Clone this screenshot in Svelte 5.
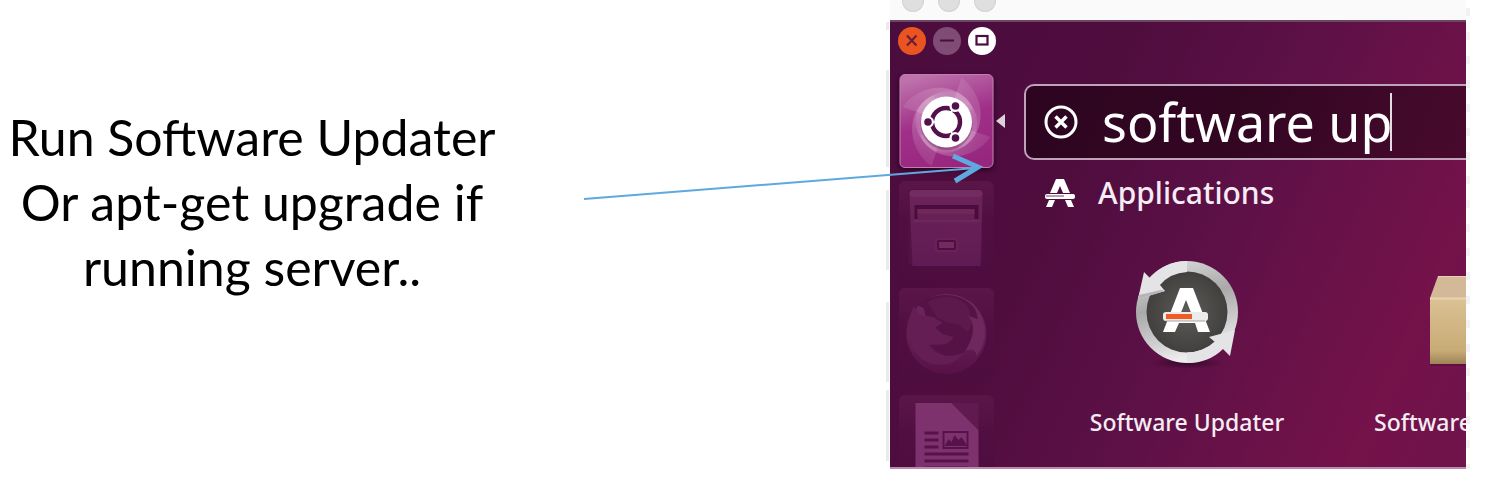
<script>
  let query = $state('software up');
  const lines = ['Run Software Updater', 'Or apt-get upgrade if', 'running server..'];
</script>

<main class="slide">
  <p class="caption">
    {#each lines as line}<span>{line}</span>{/each}
  </p>

  <section class="shot">
    <div class="window">
      <div class="titlebar"><i></i><i></i><i></i></div>
      <div class="desktop">
        <div class="controls">
          <button class="close" aria-label="Close">
            <svg viewBox="0 0 28 28"><path d="M9 8.500l9.500 10M18.500 8.500L9 18.500" stroke="#6b1d3a" stroke-width="2.200" /></svg>
          </button>
          <button class="minimize" aria-label="Minimize">
            <svg viewBox="0 0 28 28"><path d="M7 13.500h14" stroke="#4b0c3e" stroke-width="2" /></svg>
          </button>
          <button class="restore" aria-label="Restore">
            <svg viewBox="0 0 28 28"><rect x="8.500" y="9" width="11" height="8.500" fill="none" stroke="#4b0c3e" stroke-width="2.200" /></svg>
          </button>
        </div>

        <div class="dash">
          <nav class="launcher">
            <button class="tile home" aria-label="Dash home">
              <svg viewBox="0 0 94 94">
                <defs>
                  <linearGradient id="home" x1="0.300" y1="0" x2="0.600" y2="1">
                    <stop offset="0" stop-color="#bd72ab" />
                    <stop offset="0.500" stop-color="#a02f88" />
                    <stop offset="1" stop-color="#97277e" />
                  </linearGradient>
                  <linearGradient id="blade" x1="0" y1="0" x2="1" y2="0.500">
                    <stop offset="0" stop-color="#fff" stop-opacity="0.050" />
                    <stop offset="0.800" stop-color="#fff" stop-opacity="0.280" />
                    <stop offset="1" stop-color="#fff" stop-opacity="0.100" />
                  </linearGradient>
                  <clipPath id="tile"><rect x="1" y="1" width="92" height="92" rx="4" /></clipPath>
                </defs>
                <rect x="0.500" y="0.500" width="93" height="93" rx="5" fill="url(#home)" stroke="#c57cb6" />
                <g clip-path="url(#tile)">
                  {#each [0, 90, 180, 270] as angle}
                    <path d="M3 33C22 6 66 6 77 42C80 58 72 70 60 74L47 48z" fill="url(#blade)" transform="rotate({angle} 47 48)" />
                  {/each}
                </g>
                <circle cx="47" cy="50" r="26" fill="#5c1650" opacity="0.350" />
                <circle cx="47" cy="48" r="25.500" fill="#fff" />
                <circle cx="46.500" cy="48" r="14" fill="none" stroke="#54104a" stroke-width="4.500" />
                <path d="M46 48l-20 0M46 48l10-17.300M46 48l10 17.300" stroke="#fff" stroke-width="1.500" />
                <circle cx="29" cy="48" r="5.500" fill="#fff" />
                <circle cx="55.500" cy="32.500" r="5.500" fill="#fff" />
                <circle cx="55.500" cy="63.500" r="5.500" fill="#fff" />
                <g fill="#54104a">
                  <circle cx="28.500" cy="48" r="3.800" />
                  <circle cx="56" cy="32" r="3.800" />
                  <circle cx="56" cy="64" r="3.800" />
                </g>
              </svg>
              <svg class="pointer" viewBox="0 0 10 14"><path d="M0 7L9 0v14z" fill="#dcd3da" /></svg>
            </button>

            <button class="tile" aria-label="Files">
              <svg viewBox="0 0 94 94">
                <defs>
                  <linearGradient id="files" x1="0" y1="0" x2="0" y2="1">
                    <stop offset="0" stop-color="#6c2459" />
                    <stop offset="1" stop-color="#5f1b53" />
                  </linearGradient>
                </defs>
                <path d="M14 8h65q4 0 4 5v66q0 6-5 6H15q-6 0-6-6V14q0-6 5-6z" fill="#521344" />
                <path d="M14 9h65q4 0 4 5l-2 71H13L10 14q0-5 4-5z" fill="url(#files)" />
                <rect x="10" y="9" width="73" height="7" rx="4" fill="#722c60" />
                <path d="M15 38V24h64v14h-4V28H18v10z" fill="#490d3d" />
                <rect x="18" y="28" width="57" height="5" fill="#702859" />
                <path d="M14 40h66" stroke="#6e275b" stroke-width="2" />
                <rect x="35" y="57" width="24" height="14" rx="2" fill="#6a2159" />
                <rect x="38.500" y="60" width="17" height="8" rx="1" fill="#74295f" stroke="#4d0f40" stroke-width="2" />
              </svg>
            </button>

            <button class="tile" aria-label="Firefox">
              <svg viewBox="0 0 94 94">
                <defs>
                  <linearGradient id="fox" x1="0" y1="0" x2="0" y2="1">
                    <stop offset="0" stop-color="#6e2a5b" />
                    <stop offset="0.600" stop-color="#641c53" />
                    <stop offset="1" stop-color="#561147" />
                  </linearGradient>
                </defs>
                <circle cx="47" cy="46" r="40" fill="url(#fox)" />
                <path d="M18 17C31 4 63 2 76 22C87 42 73 68 52 68C41 68 34 61 29 56L42 56C48 54 52 51 54 49L43 46 36 40 38 34 27 31 24 20z" fill="#541245" />
                <path d="M28 14C45 4 67 10 70 23C74 34 72 40 68 44L58 36 49 35 38 30z" fill="#5c1a4c" />
                <path d="M67 10C87 24 91 51 77 68C76 60 70 61 65 64C76 48 75 35 69 28L78 31C78 23 73 14 67 10z" fill="#6f285d" />
                <path d="M8 34L14 18 20 27 34 29 43 35 35 40 35 47 54 49C49 59 39 56 29 57C37 70 54 70 65 64C53 83 22 80 13 60z" fill="#651e54" />
              </svg>
            </button>

            <button class="tile" aria-label="Writer">
              <svg viewBox="0 0 94 94">
                <path d="M16 8h36l27 27v59H16z" fill="#7e326d" />
                <path d="M52 8l27 27V8z" fill="#601a50" />
                <path d="M25 38h14M25 45h14M25 52h14M25 59h44M25 66h44M25 73h44" stroke="#58124a" stroke-width="3" />
                <rect x="44" y="37" width="24" height="16" fill="#7e326d" stroke="#58124a" stroke-width="2" />
                <path d="M45 51l4-7 3 3 3-7 4 5 3-3 6 9z" fill="#58124a" />
              </svg>
            </button>
          </nav>

          <div class="results">
            <div class="search">
              <button class="clear" aria-label="Clear search">
                <svg viewBox="0 0 34 34" fill="none" stroke="#fff">
                  <circle cx="17" cy="17" r="15" stroke-width="3" />
                  <path d="M11.500 11.500l11 11M22.500 11.500l-11 11" stroke-width="3.500" />
                </svg>
              </button>
              <input type="text" aria-label="Search your computer" bind:value={query} />
              <span class="caret"></span>
            </div>

            <h2>
              <svg viewBox="0 0 32 30" fill="#fff">
                <path d="M12 1h8l6 14h-7l-3-7-3 7H6z" />
                <rect x="1" y="16" width="30" height="5" rx="2" />
                <path d="M2 18h18" stroke="#69405f" stroke-width="1" />
                <path d="M5 22h6l-3 7H2zM21 22h6l3 7h-6z" />
              </svg>
              Applications
            </h2>

            <div class="apps">
              <a class="app" href="#updater">
                <svg viewBox="0 0 112 112">
                  <defs>
                    <linearGradient id="ring" x1="0" y1="0" x2="0.300" y2="1">
                      <stop offset="0" stop-color="#e4e4e5" />
                      <stop offset="0.480" stop-color="#a9a9a9" />
                      <stop offset="0.800" stop-color="#cfcfcf" />
                      <stop offset="1" stop-color="#ededee" />
                    </linearGradient>
                    <radialGradient id="core">
                      <stop offset="0" stop-color="#5d5c59" />
                      <stop offset="1" stop-color="#41403e" />
                    </radialGradient>
                    <radialGradient id="shade">
                      <stop offset="0" stop-color="#25041f" stop-opacity="0.700" />
                      <stop offset="1" stop-color="#25041f" stop-opacity="0" />
                    </radialGradient>
                  </defs>
                  <ellipse cx="56" cy="106" rx="38" ry="6" fill="url(#shade)" />
                  <circle cx="56" cy="55" r="51" fill="url(#ring)" />
                  <circle cx="56" cy="55" r="40.500" fill="url(#core)" />
                  <path d="M13 15l6 6Q34 4 56 4L56 15Q39 16 29 28L34 34 7 42z" fill="#e4e4e6" />
                  <path d="M7 42l27-8-4-1-22 5z" fill="#b5b5b5" />
                  <path d="M104 73L78 80l6 5Q72 95 56 95.500V106Q78 106 92 92l7 7z" fill="#e4e4e6" />
                  <path d="M49 31h13l17 44H67l-3-9H48l-4 9H32zm6 12l-6 15h12z" fill="#fff" />
                  <rect x="32" y="55" width="45" height="9" rx="3" fill="#ececec" />
                  <path d="M35 64h39" stroke="#a5a5a5" stroke-width="1" />
                  <rect x="35" y="57" width="26" height="5" fill="#f15a22" />
                </svg>
                <span>Software Updater</span>
              </a>
              <a class="app clipped" href="#software">
                <svg viewBox="0 0 112 112">
                  <defs>
                    <linearGradient id="box" x1="0" y1="0" x2="0" y2="1">
                      <stop offset="0" stop-color="#dbc194" />
                      <stop offset="0.800" stop-color="#c8ab75" />
                      <stop offset="1" stop-color="#9d8257" />
                    </linearGradient>
                  </defs>
                  <rect x="0" y="106" width="112" height="3" fill="#3c0828" opacity="0.300" />
                  <path d="M8 19h96l8 22H0z" fill="#d4b999" />
                  <path d="M8 19.500h96" stroke="#e8d2b6" />
                  <rect y="41" width="112" height="66" fill="url(#box)" />
                  <path d="M0 41.500h112" stroke="#ead6ae" stroke-width="2" />
                </svg>
                <span>Software</span>
              </a>
            </div>
          </div>
        </div>
      </div>
    </div>

    <svg class="arrow" viewBox="0 0 410 50" fill="none" stroke="#5fa9df">
      <path d="M4 49L396 18" stroke-width="2" />
      <path d="M373 6l25 11-23 14" stroke-width="5" />
    </svg>
  </section>
</main>

<style>
  :global(body) {
    margin: 0;
    background: #fff;
  }
  .slide {
    display: grid;
    grid-template-columns: 504fr 386fr 576fr 26fr;
    align-items: start;
    padding-bottom: 19px;
    overflow: hidden;
  }
  .caption {
    margin: 0;
    padding-top: 105px;
    font: 50px/65px Lato, sans-serif;
    color: #000;
    text-align: center;
    white-space: nowrap;
  }
  .caption span {
    display: block;
  }
  .shot {
    grid-column: 3;
    position: relative;
    min-width: 0;
    font-family: 'Noto Sans', sans-serif;
    font-weight: 500;
    color: #f5edf3;
  }
  .shot::before,
  .shot::after {
    content: '';
    position: absolute;
    top: 0;
    bottom: 0;
  }
  .shot::before {
    left: -4px;
    width: 3px;
    background: linear-gradient(#fff 22px, #eaeaea 22px 30px, #fff 30px 70px, #eaeaea 70px 167px, #fff 167px 190px, #eaeaea 190px 270px, #fff 270px 302px, #eaeaea 302px 382px, #fff 382px 390px, #eaeaea 390px 461px, #fff 461px);
  }
  .shot::after {
    right: -4px;
    width: 4px;
    background: repeating-linear-gradient(#fff 0 8px, #f2f2f2 8px 16px, #fff 16px 24px);
  }
  .window {
    overflow: hidden;
    border-bottom: 2px solid #b98aaa;
  }
  .titlebar {
    display: flex;
    gap: 14px;
    height: 20px;
    padding-left: 12px;
    background: #fafafa;
  }
  .titlebar i {
    box-sizing: border-box;
    width: 22px;
    height: 12px;
    border: 1px solid #d2d2d2;
    border-top: 0;
    border-radius: 0 0 11px 11px;
    background: #dfdfdf;
  }
  .desktop {
    border-top: 2px solid #6d4565;
    background: linear-gradient(115deg, #4b0c3e 0%, #4f0d3e 32%, #5f1147 58%, #74124a 85%, #6f134b 100%);
  }
  .controls {
    display: flex;
    gap: 7px;
    padding: 5px 8px 19px;
  }
  button {
    display: block;
    padding: 0;
    border: 0;
    background: none;
  }
  svg {
    display: block;
    width: 100%;
    height: 100%;
  }
  .controls button {
    width: 28px;
    height: 28px;
    border-radius: 50%;
  }
  .controls .close {
    background: #e95420;
  }
  .controls .minimize {
    background: #7f4c76;
  }
  .controls .restore {
    background: #fff;
  }
  .dash {
    display: flex;
  }
  .launcher {
    display: flex;
    flex: none;
    flex-direction: column;
    gap: 13px;
    box-sizing: border-box;
    width: 115px;
    height: 0;
    min-height: 100%;
    padding-left: 9px;
    border-right: 1px solid #642052;
  }
  .tile {
    position: relative;
    flex: none;
    width: 95px;
    height: 94px;
    border-radius: 6px;
    background: linear-gradient(#5b1649, #510f41 40%, #4e0d3f);
  }
  .home {
    box-shadow: 0 2px 5px #26051f;
  }
  .pointer {
    position: absolute;
    top: 40px;
    left: 97px;
    width: 10px;
    height: 14px;
  }
  .results {
    flex: 1;
    min-width: 0;
    padding: 10px 0 30px 19px;
  }
  .search {
    display: flex;
    align-items: center;
    box-sizing: border-box;
    height: 76px;
    padding-left: 18px;
    border: 2px solid #bfa3b8;
    border-right: 0;
    border-radius: 10px 0 0 10px;
    background: linear-gradient(110deg, #2d0520, #330622 50%, #480a2e);
  }
  .clear {
    width: 34px;
    height: 34px;
  }
  input {
    width: 288px;
    margin-left: 24px;
    padding: 0;
    border: 0;
    outline: 0;
    background: none;
    color: #fff;
    font: 52px/64px 'Noto Sans', sans-serif;
  }
  .caret {
    width: 2px;
    height: 58px;
    background: #e4dce2;
  }
  h2 {
    display: flex;
    align-items: center;
    gap: 22px;
    margin: 13px 0 0;
    padding-left: 20px;
    font-size: 30px;
    font-weight: 500;
    line-height: 40px;
  }
  h2 svg {
    width: 32px;
    height: 30px;
  }
  .apps {
    display: grid;
    grid-template-columns: 284px 92px;
    gap: 45px;
    margin-top: 44px;
    padding-left: 21px;
  }
  .app {
    display: flex;
    flex-direction: column;
    align-items: center;
    gap: 38px;
    color: inherit;
    font-size: 23px;
    line-height: 30px;
    text-decoration: none;
    white-space: nowrap;
  }
  .app svg {
    width: 112px;
    height: 112px;
  }
  .clipped {
    align-items: flex-start;
  }
  .clipped svg {
    margin-left: 56px;
  }
  .arrow {
    position: absolute;
    top: 150px;
    left: -310px;
    width: 410px;
    height: 50px;
  }
</style>
